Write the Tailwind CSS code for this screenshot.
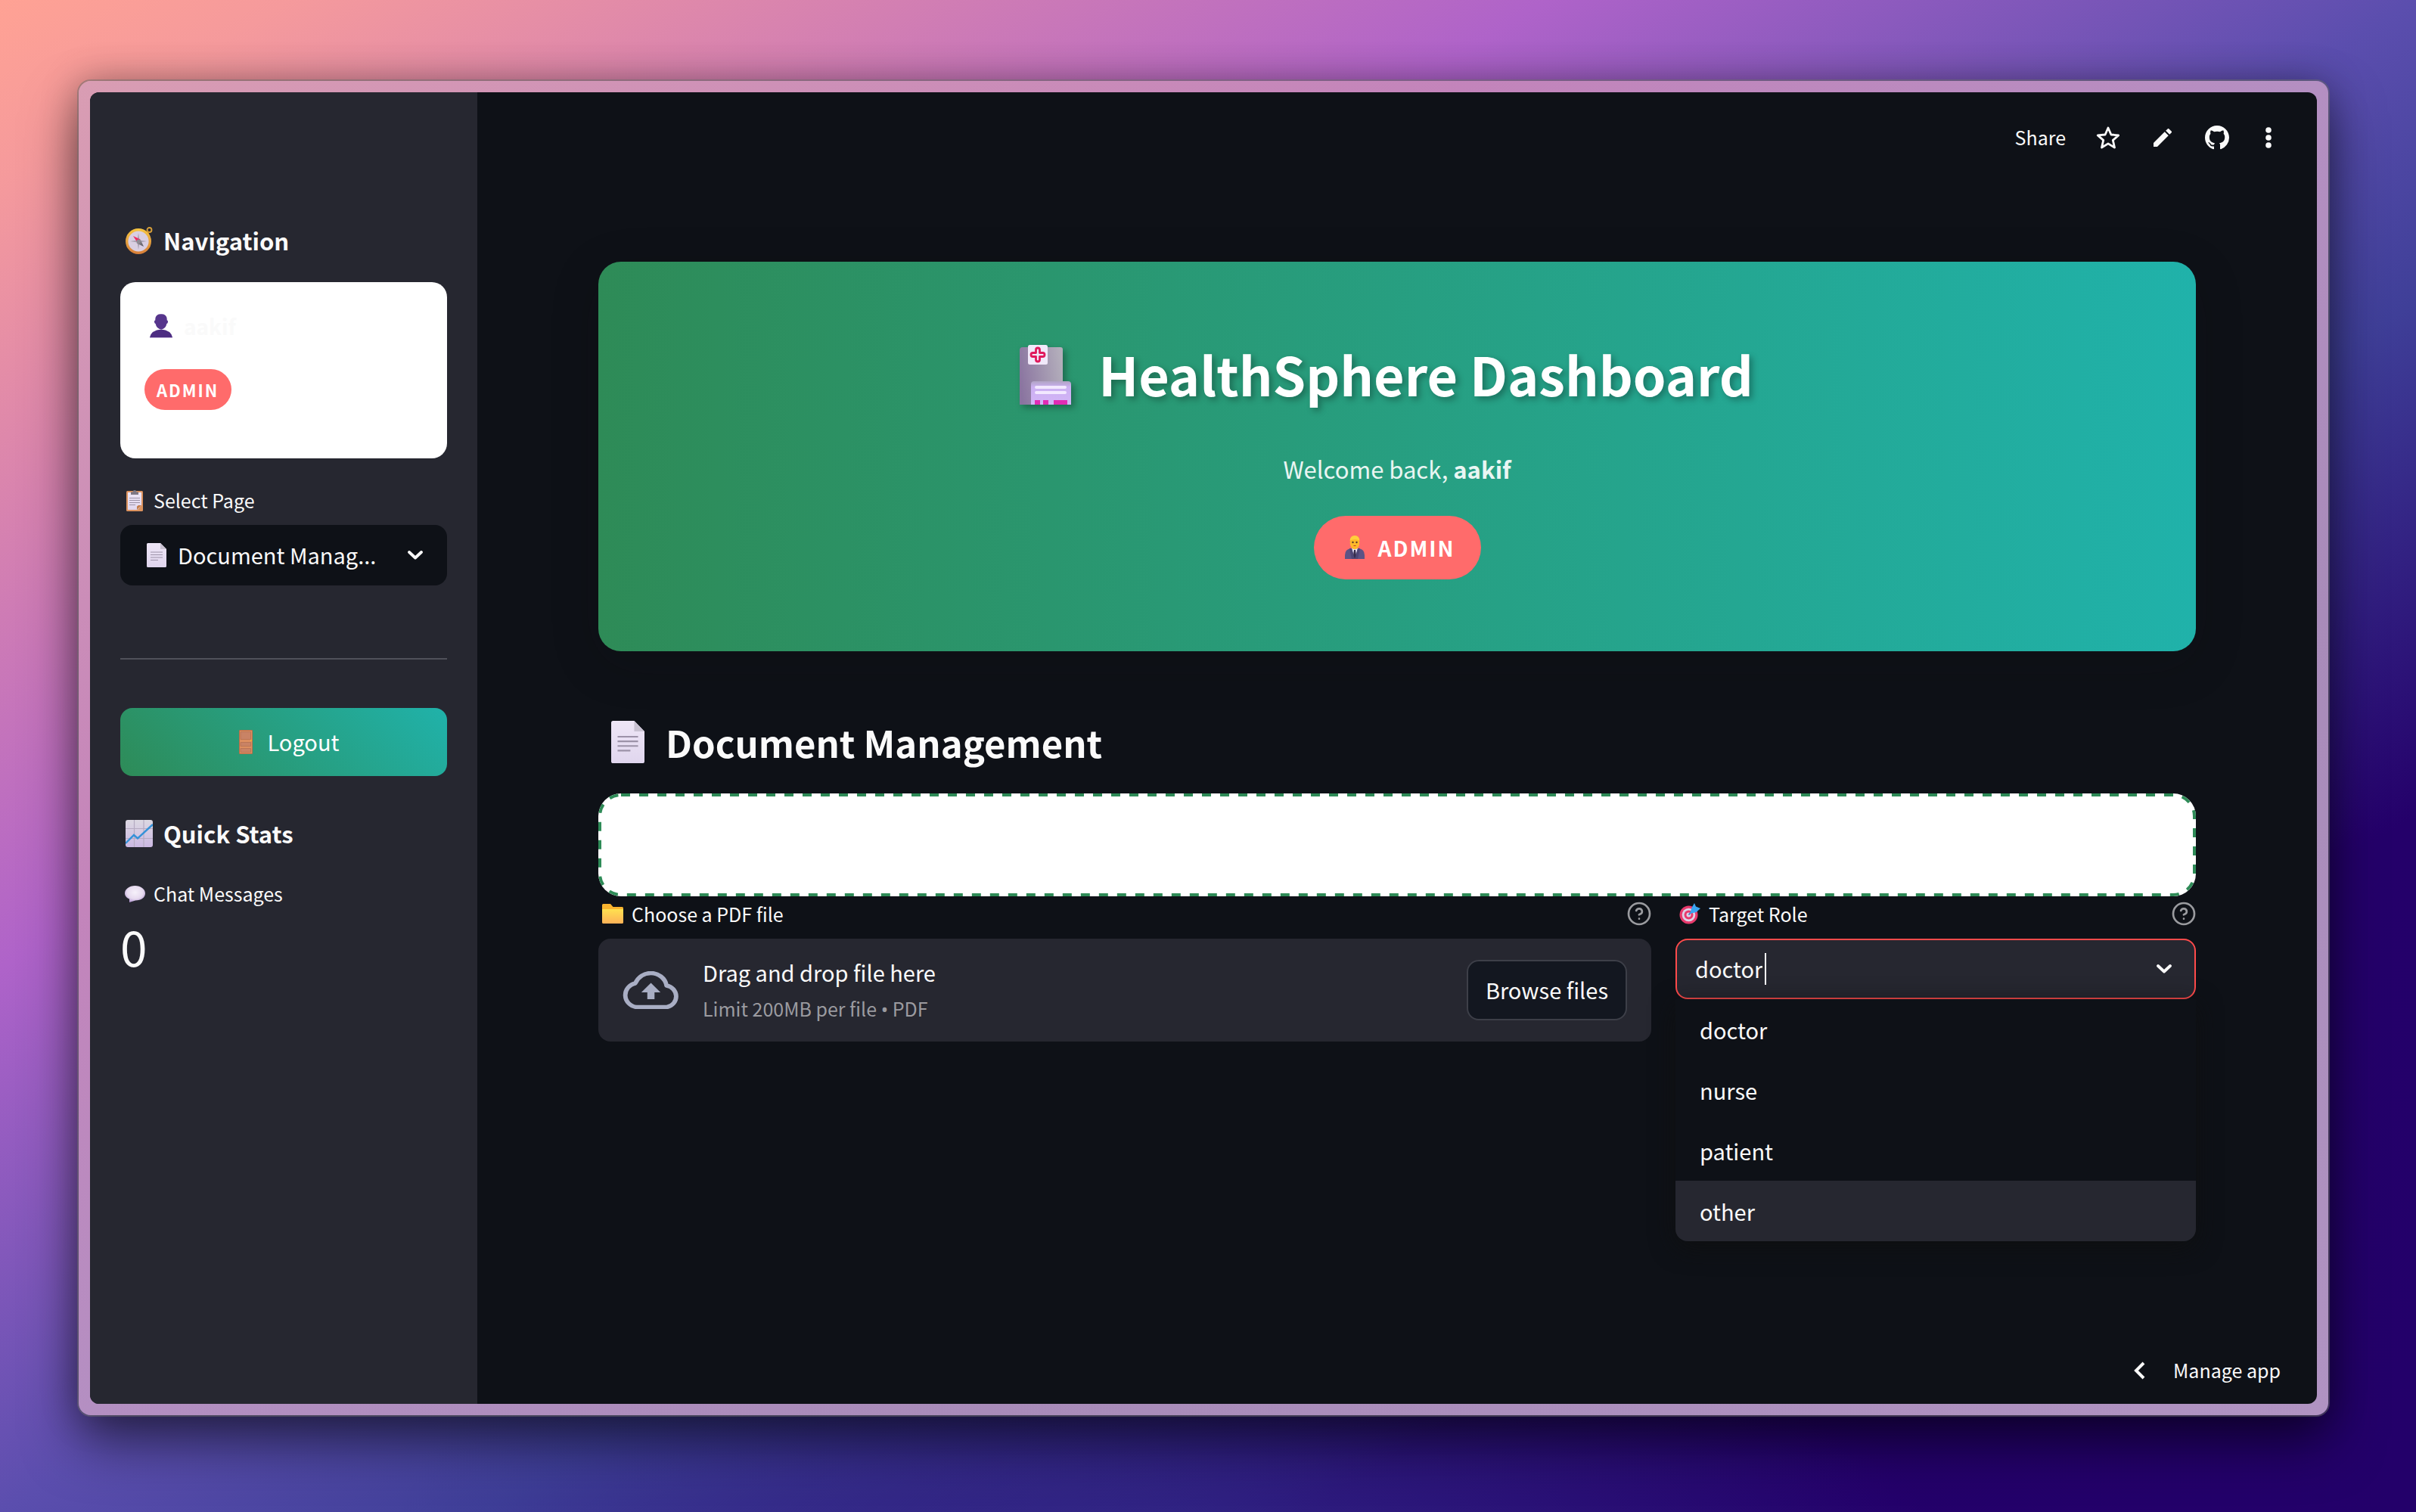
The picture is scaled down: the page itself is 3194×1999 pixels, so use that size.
<!DOCTYPE html>
<html lang="en">
<head>
<meta charset="utf-8">
<meta name="viewport" content="width=device-width, initial-scale=1">
<title>HealthSphere Dashboard</title>
<script src="https://cdn.jsdelivr.net/npm/@tailwindcss/browser@4"></script>
</head>
<body class="flex min-h-screen bg-[radial-gradient(ellipse_32%_22%_at_48%_103%,rgba(52,48,140,0.75),transparent),linear-gradient(to_bottom_right,#ffa294_0%,#f59a9c_6%,#af63c9_32%,#5b4eae_50%,#3f3f98_60%,#24006a_77%,#23006a_100%)] pt-[107px] pr-[116px] pb-[128px] pl-[104px] font-['Noto_Sans_CJK_SC',sans-serif] text-[29px] text-[#fafafa]">

<svg class="absolute h-0 w-0" aria-hidden="true">
  <defs>
    <linearGradient id="paper" x1="0" y1="0" x2="0" y2="1"><stop offset="0" stop-color="#eee6f6"/><stop offset="1" stop-color="#e0d6ee"/></linearGradient>
    <linearGradient id="gold" x1="0" y1="0" x2="0" y2="1"><stop offset="0" stop-color="#f5c342"/><stop offset="1" stop-color="#d8813a"/></linearGradient>
    <linearGradient id="needle" x1="0" y1="0" x2="1" y2="1"><stop offset="0" stop-color="#a8a5ab"/><stop offset="1" stop-color="#55525a"/></linearGradient>
    <linearGradient id="folder" x1="0" y1="0" x2="0" y2="1"><stop offset="0" stop-color="#ffe14f"/><stop offset="1" stop-color="#fdb158"/></linearGradient>
    <linearGradient id="tower" x1="0" y1="0.6" x2="1" y2="0.4"><stop offset="0" stop-color="#8a74a0"/><stop offset="1" stop-color="#b3aebb"/></linearGradient>
    <linearGradient id="wing" x1="0" y1="0" x2="0" y2="1"><stop offset="0" stop-color="#b0a4c4"/><stop offset="0.25" stop-color="#cbb0f2"/><stop offset="1" stop-color="#d3b5f7"/></linearGradient>
    <linearGradient id="chart" x1="0" y1="0" x2="0" y2="1"><stop offset="0" stop-color="#dcd8e2"/><stop offset="1" stop-color="#cbb8e2"/></linearGradient>
    <radialGradient id="bubble" cx="0.5" cy="0.4" r="0.65"><stop offset="0" stop-color="#f6f1fa"/><stop offset="0.6" stop-color="#e6daef"/><stop offset="1" stop-color="#a98bcb"/></radialGradient>
    <symbol id="page" viewBox="0 0 26 32" preserveAspectRatio="none">
      <path d="M1.500 0H18l8 8v22.500a1.500 1.500 0 0 1-1.500 1.500h-23A1.500 1.500 0 0 1 0 30.500v-29A1.500 1.500 0 0 1 1.500 0z" fill="url(#paper)"/>
      <path d="M18 0l8 8h-8z" fill="#c9c2d2"/>
      <path d="M5 12h16M5 15.500h16M5 19h16M5 22.500h10" stroke="#9c92a8" stroke-width="1.200"/>
    </symbol>
    <symbol id="help" viewBox="0 0 24 24">
      <g fill="none" stroke="currentColor" stroke-width="2" stroke-linecap="round" stroke-linejoin="round"><circle cx="12" cy="12" r="10.500"/><path d="M9.090 9a3 3 0 0 1 5.830 1c0 2-3 3-3 3M12 17h.01"/></g>
    </symbol>
    <symbol id="chevron" viewBox="0 0 20 12">
      <path d="M2 2l8 7.500L18 2" fill="none" stroke="currentColor" stroke-width="3.800" stroke-linecap="round" stroke-linejoin="round"/>
    </symbol>
  </defs>
</svg>

<div class="flex flex-1 rounded-2xl bg-[linear-gradient(to_bottom_right,#d99db3_0%,#c384bb_31%,#b48fc2_50%,#a88bb9_70%,#b093c2_100%)] p-[15px] shadow-[0_0_0_2px_rgba(110,110,110,0.5),0_36px_70px_rgba(0,0,0,0.5),0_0_50px_rgba(0,0,0,0.3)]">
  <div class="flex flex-1 overflow-hidden rounded-xl bg-[#0e1117]">

    <aside class="w-[512px] shrink-0 bg-[#262730] px-10 pt-[172px]">
      <h2 class="flex h-12 items-center gap-[14px] pl-[7px] text-[31px] leading-[48px] font-bold">
        <svg class="h-9 w-9" viewBox="0 0 36 36" aria-hidden="true">
          <circle cx="31.500" cy="4" r="3" fill="none" stroke="#d9a03a" stroke-width="1.800"/>
          <path d="M26 7l4-2 1 4-3 2z" fill="#c98a30"/>
          <circle cx="17" cy="19" r="15.300" fill="#d9cfe2" stroke="url(#gold)" stroke-width="3.400"/>
          <path d="M17 8l1.500 9.500L28 19l-9.500 1.500L17 30l-1.500-9.500L6 19l9.500-1.500z" fill="#a9a2b2"/>
          <path d="M10 12l9.500 4.500-4 4z" fill="#ee2b62"/>
          <path d="M24 26l-9.500-4.500 5-5z" fill="url(#needle)"/>
          <circle cx="17" cy="19" r="2.600" fill="#8f8b95"/>
        </svg>
        Navigation
      </h2>

      <section class="mt-[31px] h-[233px] rounded-[20px] bg-white px-8 pt-8">
        <p class="flex h-13 items-center gap-[15px] pl-[7px] text-[28px] font-bold">
          <svg class="h-8 w-[30px]" viewBox="0 0 30 32" aria-hidden="true">
            <path d="M7.500 5Q9 0 15 .3 21 0 22.500 5l.3 3.500q1.500 0 1.200 2.300-.2 2-1.600 2.200Q21 20 15.200 20.400 9 20 7.600 13 6.200 12.800 6 10.800 5.700 8.500 7.200 8.500z" fill="#56358c"/>
            <path d="M0 31q2-9.500 15-10.500Q28 21.500 30 31z" fill="#4d2d82"/><path d="M0 31.500h30" stroke="#c6b6da"/>
          </svg>
          aakif
        </p>
        <span class="mt-[31px] flex h-[54px] w-[115px] items-center rounded-full bg-[#ff6b6b] pl-4 text-[22px] font-bold tracking-[2px] text-white">ADMIN</span>
      </section>

      <label for="page-select" class="mt-9 flex h-10 items-center gap-[14px] pl-2 text-[25px]">
        <svg class="h-7 w-[22px]" viewBox="0 0 22 28" aria-hidden="true">
          <rect y="1" width="22" height="27" rx="1.500" fill="#dc935f"/><path d="M2 3h18v17l-5 6H2z" fill="url(#paper)"/><path d="M20 20l-6 6v-4.500l2-1.500z" fill="#c47c48"/>
          <path d="M6 2.500h2.500a2.500 2.500 0 0 1 5 0H16V6H6z" fill="#7e7884"/><path d="M4 10.500h14M4 13.500h14M4 16.500h14M4 19.500h8" stroke="#9c92a8"/>
        </svg>
        Select Page
      </label>
      <div class="relative mt-3">
        <select id="page-select" class="block h-20 w-full appearance-none rounded-2xl bg-[#0e1117] pl-19">
          <option>Document Manag...</option>
        </select>
        <svg class="pointer-events-none absolute top-6 left-[35px] h-8 w-[26px]" aria-hidden="true"><use href="#page"/></svg>
        <svg class="pointer-events-none absolute top-[34px] right-8 h-3 w-5" aria-hidden="true"><use href="#chevron"/></svg>
      </div>

      <hr class="mt-24 border-t-2 border-[#50515a]">

      <button class="mt-16 flex h-[90px] w-full items-center justify-center gap-5 rounded-2xl bg-[linear-gradient(45deg,#2e8b57,#20b2aa)] pl-[14px] text-white" type="button">
        <svg class="h-8 w-[18px]" viewBox="0 0 18 32" aria-hidden="true">
          <rect width="18" height="32" rx="1.200" fill="#b76f4b"/><rect x="1" y="1" width="16" height="30" fill="#dd8f60"/>
          <path d="M2 2.500h13.500v10H2zM2 16.500h13.500v5H2zM2 24.500h13.500v5H2z" fill="#c98365" stroke="#b57052" stroke-width=".8"/><circle cx="16" cy="14" r="1" fill="#f5b32e"/>
        </svg>
        Logout
      </button>

      <h2 class="mt-[52px] flex h-12 items-center gap-[14px] pl-[7px] text-[31px] leading-[48px] font-bold">
        <svg class="h-9 w-9" viewBox="0 0 36 36" aria-hidden="true">
          <rect width="36" height="36" rx="3" fill="url(#chart)"/><path d="M0 11.500h36M0 24.500h36M11.500 0v36M24 0v36" stroke="#b5abc2" stroke-width="1.200"/>
          <path d="M0 31l11-11 5 4.500L36 6" fill="none" stroke="#3492d8" stroke-width="2.400"/>
        </svg>
        Quick Stats
      </h2>
      <p class="mt-9 flex h-10 items-center gap-[11px] pl-1.5 text-[25px]">
        <svg class="h-[22px] w-[27px]" viewBox="0 0 27 22" aria-hidden="true"><path d="M13.500 0C21 0 27 4.500 27 10s-5 9.500-13 9.500L6 22v-4.500C2.500 16 0 13.500 0 10 0 4.500 6 0 13.500 0z" fill="url(#bubble)"/></svg>
        Chat Messages
      </p>
      <p class="text-[64px] leading-24">0</p>
    </aside>

    <main class="flex min-w-0 flex-1 flex-col">
      <header class="flex h-[120px] items-center justify-end pr-15">
        <button type="button" class="text-[25px]">Share</button>
        <button type="button" class="ml-10" aria-label="Favorite">
          <svg class="block h-8 w-8" viewBox="0 0 32 32" aria-hidden="true"><path d="M16 3l3.900 9 9.800.9-7.400 6.500 2.200 9.600-8.500-5.100L7.500 29l2.200-9.600-7.400-6.500 9.800-.9z" fill="none" stroke="currentColor" stroke-width="2.800" stroke-linejoin="round"/></svg>
        </button>
        <button type="button" class="ml-11" aria-label="Edit source">
          <svg class="block h-6 w-6" viewBox="3 3 18 18" aria-hidden="true"><path d="M3 17.250V21h3.750L17.810 9.940l-3.750-3.750L3 17.250zM20.710 7.040a.996.996 0 0 0 0-1.410l-2.340-2.340a.996.996 0 0 0-1.410 0l-1.830 1.830 3.750 3.750 1.830-1.830z" fill="currentColor"/></svg>
        </button>
        <button type="button" class="ml-11" aria-label="View on GitHub">
          <svg class="block h-8 w-8" viewBox="0 0 16 16" aria-hidden="true"><path d="M8 0C3.580 0 0 3.580 0 8c0 3.540 2.290 6.530 5.470 7.590.4.070.55-.17.55-.38 0-.19-.01-.82-.01-1.490-2.010.37-2.530-.49-2.690-.94-.09-.23-.48-.94-.82-1.130-.28-.15-.68-.52-.01-.53.63-.01 1.080.58 1.230.82.72 1.210 1.870.87 2.330.66.07-.52.28-.87.51-1.070-1.780-.2-3.640-.89-3.640-3.950 0-.87.31-1.590.82-2.150-.08-.2-.36-1.020.08-2.120 0 0 .67-.21 2.200.82.64-.18 1.320-.27 2-.27s1.360.09 2 .27c1.530-1.040 2.200-.82 2.200-.82.44 1.100.16 1.920.08 2.120.51.56.82 1.270.82 2.150 0 3.070-1.870 3.750-3.650 3.950.29.25.54.73.54 1.480 0 1.070-.01 1.930-.01 2.200 0 .21.15.46.55.38A8.010 8.010 0 0 0 16 8c0-4.420-3.580-8-8-8z" fill="currentColor"/></svg>
        </button>
        <button type="button" class="ml-12" aria-label="Menu">
          <svg class="block h-7 w-2" viewBox="0 0 8 28" aria-hidden="true"><circle cx="4" cy="4" r="3.800" fill="currentColor"/><circle cx="4" cy="14" r="3.800" fill="currentColor"/><circle cx="4" cy="24" r="3.800" fill="currentColor"/></svg>
        </button>
      </header>

      <div class="flex-1 px-40 pt-[104px]">
        <section class="flex h-[515px] flex-col items-center rounded-[30px] bg-[linear-gradient(90deg,#2e8b57,#20b2aa)] pt-[100px] text-white shadow-[0_16px_64px_rgba(15,15,15,0.2)]">
          <h1 class="flex h-24 items-center gap-9 pr-7 text-[70px] leading-[96px] font-bold [text-shadow:4px_4px_8px_rgba(0,0,0,0.3)]">
            <svg class="mt-1 h-20 w-[68px] drop-shadow-[4px_4px_4px_rgba(0,0,0,0.3)]" viewBox="0 0 68 80" aria-hidden="true">
              <path d="M4 3h50q3 0 3 3v73H0V7q0-4 4-4z" fill="url(#tower)"/>
              <path d="M19 48h45q4 0 4 4v27H15V52q0-4 4-4z" fill="url(#wing)"/>
              <path d="M22 56h38M22 63h38" stroke="#f2e8ff" stroke-width="4" stroke-linecap="round"/>
              <path d="M20 73h7v6h-7zM31 73h7v6h-7zM45 73h18v6H45z" fill="#e12cb4"/>
              <rect x="11" width="26" height="26" rx="2.500" fill="#f1e9fa"/>
              <path d="M21.500 6.500q0-2.500 2.500-2.500t2.500 2.500v4h4q2.500 0 2.500 2.500t-2.500 2.500h-4v4Q26.500 22 24 22t-2.500-2.500v-4h-4Q15 15.500 15 13t2.500-2.500h4z" fill="none" stroke="#e0195c" stroke-width="2.800" stroke-linejoin="round"/>
            </svg>
            HealthSphere Dashboard
          </h1>
          <p class="mt-12 text-[31px] leading-[60px] text-white/90">Welcome back, <strong>aakif</strong></p>
          <span class="mt-8 flex h-[84px] w-[221px] items-center gap-[18px] rounded-full bg-[#ff6b6b] pl-[41px] text-[28px] font-bold tracking-[2px]">
            <svg class="h-8 w-[26px]" viewBox="0 0 26 32" aria-hidden="true">
              <path d="M0 31V26q0-8 8-9h10q8 1 8 9v5z" fill="#5c5385"/><path d="M9 17h8l-4 14z" fill="#e9e2f4"/><path d="M12 19h2l1.200 9-2.200 3-2.200-3z" fill="#352c4c"/><path d="M9 17l4 14H9L6 17zM17 17l-4 14h4l3-14z" fill="#4e4675"/>
              <ellipse cx="13" cy="9.500" rx="6.300" ry="8.800" fill="#ffb92a"/><path d="M6.500 7Q7 0 13 0t6.500 7Q13 3 6.500 7z" fill="#ffcf3b"/><circle cx="10.500" cy="9" r="1.200" fill="#5a3c28"/><circle cx="15.500" cy="9" r="1.200" fill="#5a3c28"/><path d="M11.500 13.500h3" stroke="#c0392b" fill="none"/>
            </svg>
            ADMIN
          </span>
        </section>

        <h2 class="mt-[78px] flex h-21 items-center gap-7 pl-[17px] text-[49px] leading-[84px] font-bold">
          <svg class="h-14 w-11" aria-hidden="true"><use href="#page"/></svg>
          Document Management
        </h2>

        <div class="mt-[26px] h-34 rounded-[30px] bg-white">
          <svg class="block h-full w-full" aria-hidden="true"><rect class="h-[calc(100%_-_4px)] w-[calc(100%_-_4px)]" x="2" y="2" rx="28" fill="none" stroke="#2e8b57" stroke-width="4" stroke-dasharray="12 12"/></svg>
        </div>

        <div class="flex gap-8">
          <div class="min-w-0 flex-1">
            <div class="flex h-14 items-start justify-between pt-[3px] text-[25px] leading-10">
              <label for="pdf" class="flex items-center gap-[11px] pl-[5px]">
                <svg class="h-[26px] w-7" viewBox="0 0 28 26" aria-hidden="true"><path d="M1.500 0H11l3.500 4H26.500q1.500 0 1.500 1.500V24q0 2-2 2H2q-2 0-2-2V1.500Q0 0 1.500 0z" fill="#f9b42f"/><path d="M0 7h28v17q0 2-2 2H2q-2 0-2-2z" fill="url(#folder)"/></svg>
                Choose a PDF file
              </label>
              <svg class="mt-1 h-8 w-8 text-[#9a9b9f]" aria-hidden="true"><use href="#help"/></svg>
            </div>
            <section class="flex h-34 items-center rounded-2xl bg-[#262730] px-8">
              <svg class="h-[50px] w-[74px]" viewBox="1.500 0 70 50" preserveAspectRatio="none" aria-hidden="true"><path d="M19 47.500a16 16 0 0 1-1.500-31.500C21 8 28 2.500 37 2.500S55 9 56.500 19A14.500 14.500 0 0 1 57 47.500z" fill="none" stroke="#a9aec4" stroke-width="5.500" stroke-linejoin="round"/><path d="M37 15.500L49 28h-7.500v9h-9v-9H25z" fill="#a9aec4"/></svg>
              <div class="ml-8 flex-1">
                <p class="leading-12">Drag and drop file here</p>
                <p class="text-[25px] leading-12 text-[#9b9ba0]">Limit 200MB per file <span class="font-['Noto_Sans',sans-serif]">•</span> PDF</p>
              </div>
              <input id="pdf" type="file" accept="application/pdf" class="hidden">
              <button type="button" class="h-20 rounded-2xl border-2 border-[#3d3f48] bg-[#131720] px-[23px]">Browse files</button>
            </section>
          </div>

          <div class="w-[688px]">
            <div class="flex h-14 items-start justify-between pt-[3px] text-[25px] leading-10">
              <label for="role" class="flex items-center gap-[11px] pl-[5px]">
                <svg class="h-7 w-7" viewBox="0 0 28 28" aria-hidden="true"><circle cx="12.500" cy="15.500" r="12" fill="#e83a6c"/><circle cx="12.500" cy="15.500" r="8.800" fill="#ddd3e8"/><circle cx="12.500" cy="15.500" r="6" fill="#e83a6c"/><circle cx="12.500" cy="15.500" r="3" fill="#ddd3e8"/><path d="M12.500 15.500l7-8" stroke="#3b6fc0" stroke-width="1.600"/><path d="M14 14l2.500-8L20 0l2 4.500L28 7l-5.500 5z" fill="#3aa5f2"/></svg>
                Target Role
              </label>
              <svg class="mt-1 h-8 w-8 text-[#9a9b9f]" aria-hidden="true"><use href="#help"/></svg>
            </div>
            <div class="relative">
              <div class="flex h-20 items-center rounded-2xl border-2 border-[#ff4b4b] bg-[#262730] pr-[30px] pl-6">
                <input id="role" type="text" value="doctor" role="combobox" aria-expanded="true" aria-controls="roles" class="[field-sizing:content] outline-none">
                <span class="ml-[3px] h-[42px] w-0.5 bg-white"></span>
                <svg class="ml-auto h-3 w-5" aria-hidden="true"><use href="#chevron"/></svg>
              </div>
              <ul id="roles" role="listbox" class="absolute top-full w-full overflow-hidden rounded-b-2xl bg-[#0e1117] leading-20 shadow-[0_8px_32px_rgba(15,15,15,0.8)]">
                <li role="option" class="px-8">doctor</li>
                <li role="option" class="px-8">nurse</li>
                <li role="option" class="px-8">patient</li>
                <li role="option" class="bg-[#262730] px-8">other</li>
              </ul>
            </div>
          </div>
        </div>
      </div>

      <footer class="flex h-[88px] items-center justify-end pr-12">
        <button type="button" class="flex items-center gap-[37px] text-[25px]">
          <svg class="h-6 w-4" viewBox="0 0 16 24" aria-hidden="true"><path d="M14 2L4 12l10 10" fill="none" stroke="currentColor" stroke-width="4"/></svg>
          Manage app
        </button>
      </footer>
    </main>
  </div>
</div>
</body>
</html>
